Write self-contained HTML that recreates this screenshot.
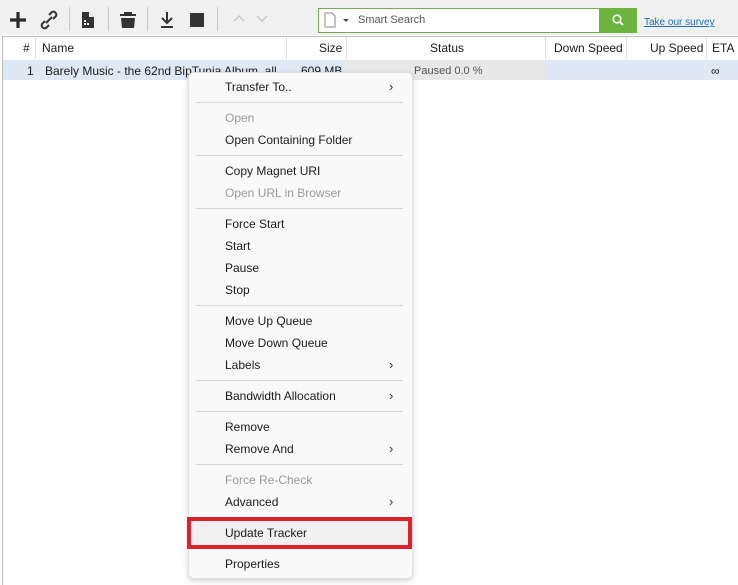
<!DOCTYPE html>
<html><head><style>
body{margin:0;width:738px;height:585px;background:#fff;font-family:"Liberation Sans",sans-serif;position:relative;overflow:hidden;font-size:12px;color:#1a1a1a}
.a{position:absolute}
.tb{left:0;top:0;width:738px;height:35px;background:#f0f0f0}
.vs{width:1px;height:24px;top:7px;background:#c8c8c8}
.hd{top:36px;left:2px;width:736px;height:23px;background:#fff;border-top:1px solid #bfbfbf}
.cd{top:37px;width:1px;height:22px;background:#dcdcdc}
.t{white-space:nowrap;line-height:14px}
.menu{left:188px;top:72px;width:223px;height:505px;background:#f9f9f9;border:1px solid #e0e0e0;border-radius:6px;box-shadow:0 2px 6px rgba(0,0,0,.18)}
.mi{left:225px;white-space:nowrap;line-height:14px;font-size:12px;color:#1a1a1a}
.dis{color:#9a9a9a}
.sep{left:196px;width:207px;height:1px;background:#d8d8d8}
.ar{left:389px;font-size:13px;color:#333;line-height:14px}
</style></head><body>
<div class="a tb"></div>
<!-- toolbar icons -->
<svg class="a" style="left:8px;top:10px" width="200" height="20" viewBox="0 0 200 20">
<path d="M10 2v16M2 10h16" stroke="#2a2a2a" stroke-width="3.2"/>
<path d="M37 11l-3 3a3 3 0 0 0 4 4l3-3M45 9l3-3a3 3 0 0 0-4-4l-3 3M38 13l6-6" stroke="#333" stroke-width="2" fill="none"/>
<path d="M74 2h7l5 5v11h-12z" fill="#333"/><path d="M81 2v5h5" fill="#f0f0f0"/><rect x="76" y="13" width="2" height="2" fill="#f0f0f0"/><rect x="79" y="13" width="2" height="2" fill="#f0f0f0"/><rect x="76" y="10" width="2" height="2" fill="#f0f0f0"/>
<path d="M112 5h16M117 5V3h6v2" stroke="#333" stroke-width="2" fill="none"/><path d="M113 8h14l-1 10h-12z" fill="#333"/>
<path d="M159 2v11M154 8l5 5 5-5M153 17h12" stroke="#333" stroke-width="2" fill="none"/>
<rect x="182" y="3" width="14" height="14" fill="#333"/>
</svg>
<div class="a vs" style="left:69px"></div><div class="a vs" style="left:108px"></div><div class="a vs" style="left:147px"></div><div class="a vs" style="left:217px"></div>
<svg class="a" style="left:232px;top:14px" width="40" height="10"><path d="M2 7l5-5 5 5M25 2l5 5 5-5" stroke="#c6c6c6" stroke-width="1.4" fill="none"/></svg>
<div class="a" style="left:318px;top:8px;width:280px;height:23px;border:1px solid #7aa84f;background:#fff"></div>
<svg class="a" style="left:323px;top:12px" width="30" height="16"><path d="M2 1h7l3 3v11H2z" fill="#fff" stroke="#888"/><path d="M20 7h6l-3 3z" fill="#444"/></svg>
<div class="a t" style="left:358px;top:13px;font-size:11px;color:#555">Smart Search</div>
<div class="a" style="left:599px;top:8px;width:38px;height:25px;background:#6cb33f"></div>
<svg class="a" style="left:611px;top:13px" width="14" height="14"><circle cx="6" cy="6" r="3.8" stroke="#fff" stroke-width="1.6" fill="none"/><path d="M9 9l3 3" stroke="#fff" stroke-width="1.8"/></svg>
<div class="a t" style="left:644px;top:16px;font-size:10px;color:#1a6fb8;text-decoration:underline">Take our survey</div>
<!-- header -->
<div class="a hd"></div>
<div class="a" style="left:2px;top:36px;width:1px;height:549px;background:#bfbfbf"></div>
<div class="a cd" style="left:35px"></div><div class="a cd" style="left:286px"></div><div class="a cd" style="left:346px"></div><div class="a cd" style="left:545px"></div><div class="a cd" style="left:626px"></div><div class="a cd" style="left:706px"></div>
<div class="a t" style="left:23px;top:41px">#</div>
<div class="a t" style="left:42px;top:41px">Name</div>
<div class="a t" style="left:319px;top:41px">Size</div>
<div class="a t" style="left:430px;top:41px">Status</div>
<div class="a t" style="left:554px;top:41px">Down Speed</div>
<div class="a t" style="left:650px;top:41px">Up Speed</div>
<div class="a t" style="left:712px;top:41px">ETA</div>
<!-- row -->
<div class="a" style="left:3px;top:60px;width:735px;height:20px;background:#dfe9f5"></div>
<div class="a" style="left:346px;top:60px;width:199px;height:20px;background:#e8e8e8"></div>
<div class="a t" style="left:27px;top:64px">1</div>
<div class="a t" style="left:45px;top:64px">Barely Music - the 62nd BipTunia Album, all</div>
<div class="a t" style="left:301px;top:64px">609 MB</div>
<div class="a t" style="left:414px;top:64px;font-size:11px;color:#555">Paused 0.0 %</div>
<div class="a t" style="left:711px;top:64px">∞</div>
<!-- menu -->
<div class="a menu"></div>
<div class="a mi" style="top:80px">Transfer To..</div><div class="a ar" style="top:80px">›</div>
<div class="a sep" style="top:102px"></div>
<div class="a mi dis" style="top:111px">Open</div>
<div class="a mi" style="top:133px">Open Containing Folder</div>
<div class="a sep" style="top:155px"></div>
<div class="a mi" style="top:164px">Copy Magnet URI</div>
<div class="a mi dis" style="top:186px">Open URL in Browser</div>
<div class="a sep" style="top:208px"></div>
<div class="a mi" style="top:217px">Force Start</div>
<div class="a mi" style="top:239px">Start</div>
<div class="a mi" style="top:261px">Pause</div>
<div class="a mi" style="top:283px">Stop</div>
<div class="a sep" style="top:305px"></div>
<div class="a mi" style="top:314px">Move Up Queue</div>
<div class="a mi" style="top:336px">Move Down Queue</div>
<div class="a mi" style="top:358px">Labels</div><div class="a ar" style="top:358px">›</div>
<div class="a sep" style="top:380px"></div>
<div class="a mi" style="top:389px">Bandwidth Allocation</div><div class="a ar" style="top:389px">›</div>
<div class="a sep" style="top:411px"></div>
<div class="a mi" style="top:420px">Remove</div>
<div class="a mi" style="top:442px">Remove And</div><div class="a ar" style="top:442px">›</div>
<div class="a sep" style="top:464px"></div>
<div class="a mi dis" style="top:473px">Force Re-Check</div>
<div class="a mi" style="top:495px">Advanced</div><div class="a ar" style="top:495px">›</div>
<div class="a" style="left:187px;top:517px;width:217px;height:24px;border:4px solid #e0202a;background:#f0f0f0"></div>
<div class="a mi" style="top:526px">Update Tracker</div>
<div class="a mi" style="top:557px">Properties</div>
</body></html>
